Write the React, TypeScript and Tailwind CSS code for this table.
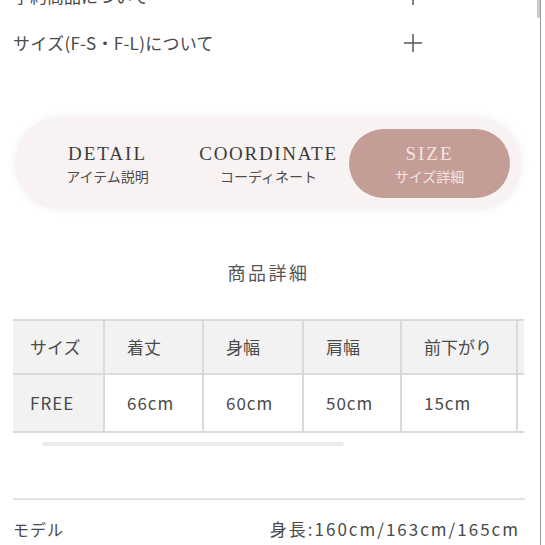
import React from "react";

function Plus() {
  return (
    <svg width="20" height="20" viewBox="0 0 20 20" className="block">
      <line x1="1" y1="10" x2="19" y2="10" stroke="#555" strokeWidth="1.5" />
      <line x1="10" y1="1" x2="10" y2="19" stroke="#555" strokeWidth="1.5" />
    </svg>
  );
}

const headers = ["サイズ", "着丈", "身幅", "肩幅", "前下がり"];
const values = ["FREE", "66cm", "60cm", "50cm", "15cm"];
const widths = ["w-[92px]", "w-[99px]", "w-[100px]", "w-[98px]", "w-[116px]"];

export default function App() {
  return (
    <div className="w-[545px] h-[545px] overflow-hidden bg-white flex font-['Noto_Sans_CJK_JP','Noto_Sans',sans-serif] text-[#4a4a4a]">
      <div className="w-[537px] shrink-0 flex flex-col pl-[13px]">
        <div className="mt-[-28px] w-[410px] h-[47px] flex items-center justify-between text-[17px]">
          <span>予約商品について</span>
          <Plus />
        </div>
        <div className="w-[410px] h-[47px] flex items-center justify-between text-[17px]">
          <span className="tracking-[0.3px]">サイズ(F-S・F-L)について</span>
          <Plus />
        </div>

        <div className="mt-[51px] ml-[2px] w-[507px] h-[93px] rounded-full bg-[#f8f3f2] shadow-[0_0_10px_rgba(0,0,0,0.06)] p-[12px] flex">
          <div className="flex-1 flex flex-col items-center justify-center">
            <span className="font-['Liberation_Serif','DejaVu_Serif',serif] text-[19px] leading-[22px] tracking-[2px] text-[#3c3c3c]">DETAIL</span>
            <span className="mt-[2px] text-[14px] leading-[18px] text-[#4d4d4d]">アイテム説明</span>
          </div>
          <div className="flex-1 flex flex-col items-center justify-center">
            <span className="font-['Liberation_Serif','DejaVu_Serif',serif] text-[19px] leading-[22px] tracking-[1.7px] text-[#3c3c3c]">COORDINATE</span>
            <span className="mt-[2px] text-[14px] leading-[18px] text-[#4d4d4d]">コーディネート</span>
          </div>
          <div className="flex-1 flex flex-col items-center justify-center rounded-full bg-[#c49d97]">
            <span className="font-['Liberation_Serif','DejaVu_Serif',serif] text-[19px] leading-[22px] tracking-[2px] text-[#f4e4e1]">SIZE</span>
            <span className="mt-[2px] text-[14px] leading-[18px] text-[#f4e4e1]">サイズ詳細</span>
          </div>
        </div>

        <div className="mt-[48px] w-[511px] text-center text-[18px] leading-[28px] tracking-[2.5px] text-[#555]">
          商品詳細
        </div>

        <div className="mt-[33px] w-[511px] overflow-hidden">
          <div className="flex flex-col w-[600px] border-t-2 border-b-2 border-[#dadada]">
            <div className="flex h-[54px] border-b-2 border-[#dadada] bg-[#f2f2f2]">
              {headers.map((h, i) => (
                <div
                  key={h}
                  className={`${widths[i]} shrink-0 h-full flex items-center border-r-2 border-[#dadada] text-[17px] ${i === 0 ? "pl-[17px]" : "pl-[22px]"}`}
                >
                  {h}
                </div>
              ))}
              <div className="w-[80px] shrink-0 h-full bg-[#f2f2f2]" />
            </div>
            <div className="flex h-[56px]">
              {values.map((v, i) => (
                <div
                  key={v}
                  className={`${widths[i]} shrink-0 h-full flex items-center border-r-2 border-[#dadada] text-[17px] tracking-[1px] ${i === 0 ? "pl-[17px] bg-[#f2f2f2]" : "pl-[22px] bg-white"}`}
                >
                  {v}
                </div>
              ))}
              <div className="w-[80px] shrink-0 h-full bg-white" />
            </div>
          </div>
        </div>

        <div className="mt-[9px] ml-[29px] w-[302px] h-[4px] rounded-full bg-[#ececec]" />

        <div className="mt-[52px] w-[512px] h-[2px] bg-[#e3e3e3]" />

        <div className="mt-[17px] w-[507px] flex items-center justify-between text-[16px] leading-[24px]">
          <span className="tracking-[1px]">モデル</span>
          <span className="text-[17px] tracking-[2px]">身長:160cm/163cm/165cm</span>
        </div>
      </div>
      <div className="w-[3px] shrink-0 flex flex-col">
        <div className="w-[3px] h-[18px] bg-[#c9c9c9] rounded-b-sm" />
      </div>
      <div className="w-px shrink-0 h-full bg-[#9a9a9a]" />
      <div className="flex-1 bg-white" />
    </div>
  );
}
